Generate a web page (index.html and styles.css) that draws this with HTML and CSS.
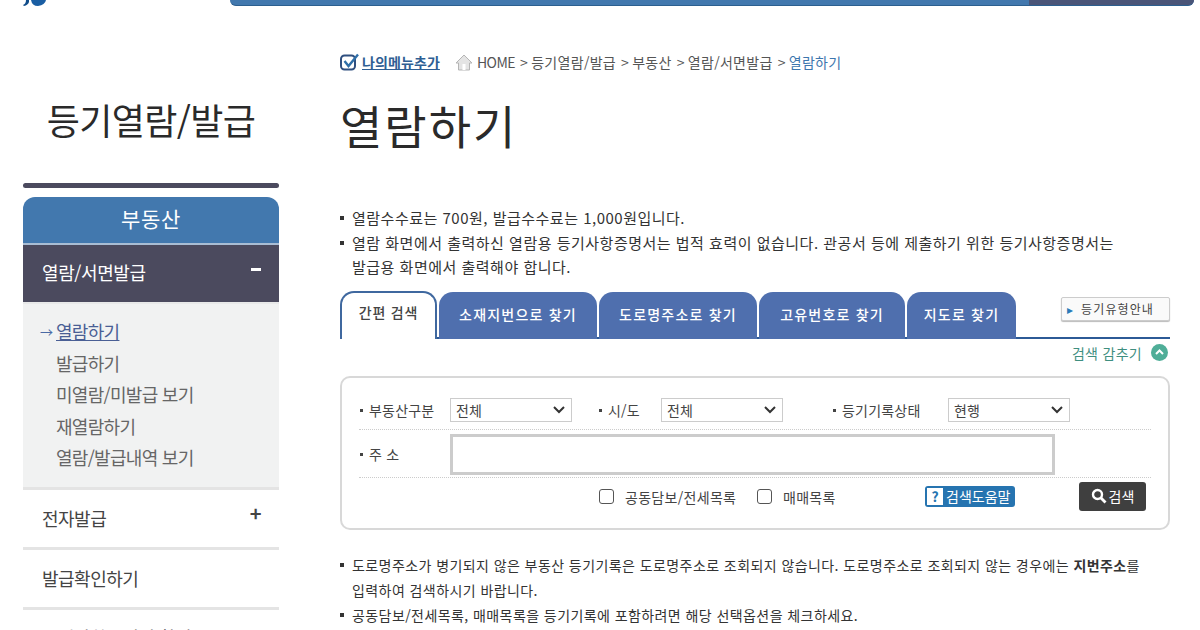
FILE: index.html
```html
<!DOCTYPE html>
<html lang="ko">
<head>
    <meta charset="UTF-8">
    <meta name="viewport" content="width=device-width, initial-scale=1.0">
    <title>열람하기</title>
    <link rel="stylesheet" href="styles.css">
</head>
<body>
    <header class="top-strip">
        <svg class="logo" width="40" height="6" viewBox="0 0 40 6">
            <path d="M3 0h3v2Q5 5 1 6L0 5Q3 4 3 0z" fill="#0f4c8a"/>
            <path d="M8 0h15Q22 5 15 6Q9 6 8 0z" fill="#1a5ea3"/>
        </svg>
        <div class="top-nav"><span class="top-nav-end"></span></div>
    </header>

    <div class="page">
        <aside class="sidebar">
            <h2 class="side-title">등기열람/발급</h2>
            <div class="side-rule"></div>
            <div class="side-head">부동산</div>
            <div class="side-open"><span>열람/서면발급</span><b class="minus"></b></div>
            <ul class="side-sub">
                <li class="current"><i>→</i><a href="#">열람하기</a></li>
                <li><a href="#">발급하기</a></li>
                <li><a href="#">미열람/미발급 보기</a></li>
                <li><a href="#">재열람하기</a></li>
                <li><a href="#">열람/발급내역 보기</a></li>
            </ul>
            <div class="side-item"><span>전자발급</span><b class="plus">+</b></div>
            <div class="side-item"><span>발급확인하기</span></div>
            <div class="side-item side-last"><span>등기사항증명서 확인</span></div>
        </aside>

        <main class="content">
            <div class="crumbs">
                <a class="my-menu" href="#">
                    <svg width="20" height="18" viewBox="0 0 20 18" fill="none">
                        <rect x="1" y="2.5" width="14" height="14" rx="3.5" stroke="#2f4f7f" stroke-width="2"/>
                        <path d="M4.5 8l4 5L18 1.5" stroke="#2f6fa8" stroke-width="2.4"/>
                    </svg>
                    <span>나의메뉴추가</span>
                </a>
                <svg class="home" width="18" height="17" viewBox="0 0 18 17">
                    <path d="M9 1L1 9h2.5v7h11V9H17z" fill="#e4e4e4" stroke="#b5b5b5"/>
                    <rect x="7.5" y="10" width="3" height="6" fill="#fff"/>
                </svg>
                <span class="crumb-home">HOME</span>
                <span class="sep">&gt;</span><span>등기열람/발급</span>
                <span class="sep wide">&gt;</span><span>부동산</span>
                <span class="sep wide">&gt;</span><span>열람/서면발급</span>
                <span class="sep wide">&gt;</span><span class="crumb-now">열람하기</span>
            </div>

            <h1 class="page-title">열람하기</h1>

            <ul class="notes notes-top">
                <li>열람수수료는 700원, 발급수수료는 1,000원입니다.</li>
                <li>열람 화면에서 출력하신 열람용 등기사항증명서는 법적 효력이 없습니다. 관공서 등에 제출하기 위한 등기사항증명서는<br>발급용 화면에서 출력해야 합니다.</li>
            </ul>

            <div class="tabs">
                <a class="tab active tab-1" href="#">간편 검색</a>
                <a class="tab tab-2" href="#">소재지번으로 찾기</a>
                <a class="tab tab-3" href="#">도로명주소로 찾기</a>
                <a class="tab tab-4" href="#">고유번호로 찾기</a>
                <a class="tab tab-5" href="#">지도로 찾기</a>
                <a class="type-btn" href="#"><i>▸</i>등기유형안내</a>
            </div>

            <div class="toggle">
                <span>검색 감추기</span>
                <svg width="17" height="17" viewBox="0 0 17 17">
                    <circle cx="8.5" cy="8.5" r="8.5" fill="#4fae98"/>
                    <path d="M5 10l3.5-3.5L12 10" fill="none" stroke="#fff" stroke-width="2"/>
                </svg>
            </div>

            <form class="search-box">
                <div class="row row-selects">
                    <label class="lbl lbl-kind">부동산구분</label>
                    <select class="sel sel-kind"><option>전체</option></select>
                    <label class="lbl lbl-city">시/도</label>
                    <select class="sel sel-city"><option>전체</option></select>
                    <label class="lbl lbl-state">등기기록상태</label>
                    <select class="sel sel-state"><option>현행</option></select>
                </div>
                <div class="row row-address">
                    <label class="lbl lbl-kind">주 소</label>
                    <input class="addr" type="text">
                </div>
                <div class="row-options">
                    <label class="chk chk-1"><input type="checkbox">공동담보/전세목록</label>
                    <label class="chk chk-2"><input type="checkbox">매매목록</label>
                    <a class="help" href="#"><b>?</b>검색도움말</a>
                    <button class="go" type="button">
                        <svg width="16" height="16" viewBox="0 0 16 16" fill="none">
                            <circle cx="6.5" cy="6.5" r="4.5" stroke="#fff" stroke-width="2.4"/>
                            <path d="M10 10l4.5 4.5" stroke="#fff" stroke-width="2.8"/>
                        </svg>검색
                    </button>
                </div>
            </form>

            <ul class="notes notes-bottom">
                <li>도로명주소가 병기되지 않은 부동산 등기기록은 도로명주소로 조회되지 않습니다. 도로명주소로 조회되지 않는 경우에는 <strong>지번주소</strong>를<br>입력하여 검색하시기 바랍니다.</li>
                <li>공동담보/전세목록, 매매목록을 등기기록에 포함하려면 해당 선택옵션을 체크하세요.</li>
            </ul>
        </main>
    </div>
</body>
</html>
```

FILE: styles.css
```css
html, body {
    margin: 0;
    height: 630px;
    overflow: hidden;
}
body {
    background-color: white;
    color: #333;
    font-family: "Noto Sans CJK KR", "Liberation Sans", sans-serif;
}
ul {
    list-style: none;
    margin: 0;
    padding: 0;
}
a {
    color: inherit;
    text-decoration: none;
}

/* top */
.top-strip {
    display: flex;
    height: 6px;
    padding-left: 23px;
    padding-right: 6px;
    justify-content: space-between;
}
.logo {
    display: block;
}
.top-nav {
    width: 964px;
    background-color: #4278ae;
    border-bottom: 1px solid #2c5f8f;
    box-sizing: border-box;
    border-radius: 0 0 8px 8px;
    display: flex;
    justify-content: flex-end;
}
.top-nav-end {
    width: 165px;
    background-color: #4a5578;
    border-radius: 0 0 8px 0;
}

.page {
    display: flex;
    padding-left: 23px;
}

/* sidebar */
.sidebar {
    width: 256px;
    flex: none;
    margin-right: 61px;
}
.side-title {
    margin: 90px 0 0;
    height: 87px;
    text-align: center;
    color: #2a2a2a;
    font-size: 36px;
    font-weight: 400;
    line-height: 47px;
    letter-spacing: -0.6px;
    white-space: nowrap;
}
.side-rule {
    height: 5px;
    background-color: #4b4a5e;
    border-radius: 3px;
}
.side-head {
    margin-top: 9px;
    height: 48px;
    background-color: #4278ae;
    border-radius: 12px 12px 0 0;
    color: white;
    font-size: 21px;
    letter-spacing: 0.6px;
    line-height: 43px;
    text-align: center;
    border-bottom: 2px solid #a9bdd4;
    box-sizing: border-box;
}
.side-open {
    display: flex;
    justify-content: space-between;
    align-items: center;
    box-sizing: border-box;
    height: 57px;
    padding: 0 18px 3px 19px;
    background-color: #4b4a5e;
    color: white;
    font-size: 18px;
    letter-spacing: -0.4px;
}
.minus {
    width: 10px;
    height: 3px;
    margin-top: -6px;
    background-color: white;
}
.side-sub {
    background-color: #f1f2f2;
    padding: 12px 0 14px 33px;
    border-top: 2px solid #e8e9e9;
    height: 157px;
    border-bottom: 3px solid #e4e4e4;
    font-size: 18px;
    line-height: 31.5px;
    color: #666;
    letter-spacing: -0.7px;
}
.side-sub li {
    position: relative;
}
.side-sub i {
    position: absolute;
    left: -16px;
    font-size: 13px;
    font-style: normal;
    color: #4a6aa5;
}
.current a {
    color: #4a5f95;
    text-decoration: underline;
}
.side-item {
    display: flex;
    justify-content: space-between;
    height: 57px;
    padding: 0 18px 0 19px;
    border-bottom: 3px solid #e4e4e4;
    font-size: 18px;
    line-height: 57px;
    color: #444;
    letter-spacing: -0.5px;
}
.side-last {
    line-height: 54px;
    border-bottom: none;
    white-space: nowrap;
}
.plus {
    font-size: 20px;
    line-height: 46px;
    color: #444;
}

/* main column */
.content {
    width: 830px;
    font-size: 14px;
}
.crumbs {
    display: flex;
    align-items: center;
    margin-top: 44px;
    height: 24px;
    font-size: 14px;
    color: #555;
    letter-spacing: 0.3px;
    white-space: nowrap;
}
.my-menu {
    display: flex;
    align-items: center;
    gap: 2px;
    color: #2f5f94;
    font-weight: 700;
    text-decoration: underline;
    letter-spacing: 0.1px;
    margin-right: 15px;
}
.home {
    margin-right: 4px;
}
.crumb-home {
    letter-spacing: -0.5px;
}
.sep {
    margin: 0 3px 0 5px;
}
.sep.wide {
    margin-left: 5px;
}
.crumb-now {
    color: #3d76ae;
}
.page-title {
    margin: 20px 0 0;
    height: 112px;
    color: #2a2a2a;
    font-size: 46px;
    font-weight: 400;
    line-height: 60px;
    letter-spacing: 2px;
}
.notes {
    color: #333;
    font-size: 15px;
    line-height: 24.5px;
    letter-spacing: 0.5px;
    white-space: nowrap;
}
.notes li {
    position: relative;
    padding-left: 12px;
}
.notes li::before {
    content: "";
    position: absolute;
    left: 0;
    top: 10px;
    width: 4px;
    height: 4px;
    background-color: #333;
}

/* tabs */
.tabs {
    display: flex;
    align-items: flex-end;
    position: relative;
    margin-top: 11px;
    height: 46px;
    border-bottom: 2px solid #2c5a96;
    gap: 2px;
}
.tab {
    box-sizing: border-box;
    height: 47px;
    margin-bottom: -2px;
    background-color: #4f6fae;
    border-radius: 14px 14px 0 0;
    color: white;
    font-size: 14px;
    font-weight: 500;
    letter-spacing: 1.2px;
    line-height: 45px;
    text-align: center;
}
.tab.active {
    background-color: white;
    color: #444;
    border: 2px solid #3f689f;
    border-bottom: none;
    letter-spacing: 0.8px;
    line-height: 39px;
    height: 48px;
}
.tab-1 { width: 97px; }
.tab-2 { width: 158px; }
.tab-3 { width: 158px; }
.tab-4 { width: 146px; }
.tab-5 { width: 109px; }
.type-btn {
    position: absolute;
    right: 0;
    top: 6px;
    box-sizing: border-box;
    width: 109px;
    height: 24px;
    border: 1px solid #ccc;
    border-radius: 2px;
    box-shadow: 0 1px 1px #bbb;
    background-color: #fafafa;
    color: #444;
    font-size: 12px;
    letter-spacing: 1.1px;
    line-height: 22px;
    padding-left: 5px;
    white-space: nowrap;
}
.type-btn i {
    font-style: normal;
    color: #2a7ab8;
    margin-right: 7px;
}
.toggle {
    display: flex;
    justify-content: flex-end;
    align-items: center;
    gap: 9px;
    height: 28px;
    padding-right: 2px;
    color: #3f8f80;
    font-size: 14px;
    letter-spacing: 0.3px;
}

/* search form */
.search-box {
    box-sizing: border-box;
    width: 830px;
    height: 154px;
    margin-top: 9px;
    padding: 14px 17px 0;
    border: 2px solid #d8d8d8;
    border-radius: 10px;
}
.row {
    display: flex;
    align-items: center;
    border-bottom: 1px dotted #ccc;
}
.row-selects {
    height: 37px;
}
.row-address {
    height: 45px;
    padding-top: 2px;
}
.lbl {
    position: relative;
    padding-left: 10px;
    box-sizing: border-box;
    font-size: 14px;
    letter-spacing: 0.2px;
    color: #444;
}
.lbl::before {
    content: "";
    position: absolute;
    left: 1px;
    top: 9px;
    width: 3px;
    height: 3px;
    background-color: #444;
}
.lbl-kind { width: 91px; }
.lbl-city { width: 63px; margin-left: 26px; }
.lbl-state { width: 116px; margin-left: 49px; }
.sel {
    box-sizing: border-box;
    height: 24px;
    width: 122px;
    border: 1px solid #ccc;
    background: white url("data:image/svg+xml,%3Csvg xmlns='http://www.w3.org/2000/svg' width='12' height='8'%3E%3Cpath d='M1 1l5 5 5-5' fill='none' stroke='%23333' stroke-width='2'/%3E%3C/svg%3E") no-repeat right 6px center;
    appearance: none;
    color: #444;
    font-family: inherit;
    font-size: 14px;
    padding-left: 5px;
}
.addr {
    box-sizing: border-box;
    width: 605px;
    height: 41px;
    border: 3px solid #ccc;
    background-color: white;
    outline: none;
}
.row-options {
    position: relative;
    height: 40px;
}
.chk {
    position: absolute;
    top: 9px;
    display: flex;
    align-items: center;
    gap: 11px;
    font-size: 14px;
    letter-spacing: 0.3px;
    color: #444;
}
.chk input {
    width: 15px;
    height: 15px;
    margin: 0;
    appearance: none;
    border: 1px solid #555;
    border-radius: 3px;
    background-color: white;
}
.chk-1 { left: 240px; }
.chk-2 { left: 398px; }
.help {
    position: absolute;
    left: 566px;
    top: 8px;
    display: flex;
    align-items: center;
    gap: 3px;
    box-sizing: border-box;
    width: 90px;
    height: 21px;
    padding-left: 2px;
    background-color: #2674b0;
    border-radius: 3px;
    color: white;
    font-size: 14px;
    white-space: nowrap;
}
.help b {
    width: 16px;
    height: 17px;
    background-color: white;
    color: #2674b0;
    font-size: 14px;
    line-height: 17px;
    text-align: center;
}
.go {
    position: absolute;
    left: 720px;
    top: 4px;
    display: flex;
    align-items: center;
    justify-content: center;
    gap: 2px;
    width: 67px;
    height: 29px;
    padding: 0;
    border: none;
    border-radius: 3px;
    background-color: #3f3f3f;
    color: white;
    font-family: inherit;
    font-size: 14px;
}
.notes-bottom {
    margin-top: 23px;
    font-size: 14px;
    line-height: 25px;
    letter-spacing: 0.42px;
}
```
